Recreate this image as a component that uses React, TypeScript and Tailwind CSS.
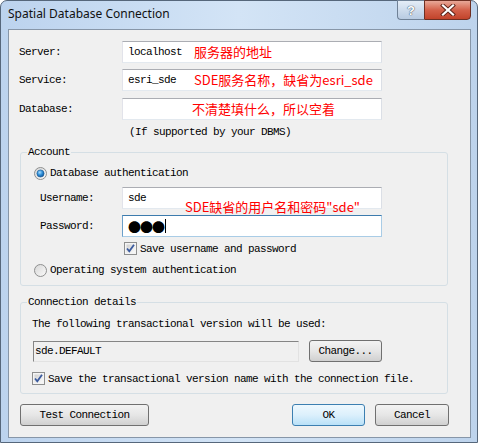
import React from "react";

const mono = { fontFamily: '"Liberation Mono", "Noto Sans CJK SC", monospace' };
const cjk = { fontFamily: '"Noto Sans CJK SC", "Noto Sans", sans-serif' };

function Radio({ checked }: { checked?: boolean }) {
  return (
    <svg width="13" height="13" viewBox="0 0 13 13" className="shrink-0">
      <defs>
        <linearGradient id="rg" x1="0" y1="0" x2="1" y2="1">
          <stop offset="0" stopColor="#d6d6d6" />
          <stop offset="1" stopColor="#fbfbfb" />
        </linearGradient>
        <radialGradient id="rd" cx="0.4" cy="0.35" r="0.7">
          <stop offset="0" stopColor="#a8dcff" />
          <stop offset="0.5" stopColor="#2f8fd8" />
          <stop offset="1" stopColor="#0d4f94" />
        </radialGradient>
      </defs>
      <circle cx="6.5" cy="6.5" r="6" fill="url(#rg)" stroke="#8e8f8f" />
      {checked && <circle cx="6.5" cy="6.5" r="3.6" fill="url(#rd)" stroke="#1b5a93" strokeWidth="0.6" />}
    </svg>
  );
}

function Check() {
  return (
    <svg width="13" height="13" viewBox="0 0 13 13" className="shrink-0">
      <defs>
        <linearGradient id="cg" x1="0" y1="0" x2="1" y2="1">
          <stop offset="0" stopColor="#cfcfcf" />
          <stop offset="1" stopColor="#fafafa" />
        </linearGradient>
      </defs>
      <rect x="0.5" y="0.5" width="12" height="12" fill="#f4f4f4" stroke="#8e8f8f" />
      <rect x="2.5" y="2.5" width="8" height="8" fill="url(#cg)" />
      <path d="M3 6.5 L5.3 9.3 L10 2.8" fill="none" stroke="#3a5a9e" strokeWidth="1.8" />
    </svg>
  );
}

function Edit({ children, focused }: { children?: React.ReactNode; focused?: boolean }) {
  const b = focused
    ? "border-[#a9cce6] border-t-[#3d7bad] border-l-[#6b9fc9]"
    : "border-[#e3e9ef] border-t-[#abadb3] border-l-[#e2e3ea] border-r-[#dbdfe6]";
  return (
    <div className={`flex h-[22px] w-[260px] items-center border bg-white pl-[5px] ${b}`}>
      {children}
    </div>
  );
}

function Button({ children, w, focused }: { children: React.ReactNode; w: string; focused?: boolean }) {
  const look = focused
    ? "border-[#3c7fb1] bg-linear-to-b from-[#eef8fe] via-[#dcf0fc] to-[#b9e1f8]"
    : "border-[#707070] bg-linear-to-b from-[#f3f3f3] via-[#e6e6e6] to-[#d0d0d0]";
  return (
    <div className={`flex h-[22px] items-center justify-center rounded-[3px] border text-black ${look} ${w}`}>
      {children}
    </div>
  );
}

function Group({ title, children }: { title: string; children: React.ReactNode }) {
  return (
    <fieldset className="ml-px w-[428px] rounded-[3px] border border-[#d5dfe5]">
      <legend className="ml-[6px] px-px leading-[12px]">{title}</legend>
      {children}
    </fieldset>
  );
}

export default function App() {
  return (
    <div className="h-[443px] w-[478px] rounded-t-[7px] border border-[#56677b] bg-linear-to-r from-[#bcd3ee] via-[#d3e4f6] to-[#bdd3ec]">
      <div className="flex h-[28px] items-start">
        <div className="pl-[7px] pt-[5px] text-[12px] leading-[16px] text-[#111]" style={{ fontFamily: '"Noto Sans", sans-serif' }}>
          Spatial Database Connection
        </div>
        <div className="mr-[6px] ml-auto -mt-px flex">
          <div className="flex h-[20px] w-[27px] items-center justify-center rounded-bl-[4px] border border-r-0 border-[#6f8196] bg-linear-to-b from-[#e4edf7] to-[#b8cbe2] text-[13px] font-bold leading-none text-white [text-shadow:0_0_1px_#36475c,0_0_1px_#36475c]" style={{ fontFamily: '"Liberation Sans", sans-serif' }}>
            ?
          </div>
          <div className="flex h-[20px] w-[47px] items-center justify-center rounded-br-[4px] border border-[#6e2f22] bg-linear-to-b from-[#e8a898] via-[#d4614a] to-[#c2432a]">
            <svg width="16" height="12" viewBox="0 0 16 12">
              <path d="M3 1.5 L13 10.5 M13 1.5 L3 10.5" stroke="#5a2116" strokeWidth="4" strokeLinecap="square" />
              <path d="M3 1.5 L13 10.5 M13 1.5 L3 10.5" stroke="#ffffff" strokeWidth="2.2" strokeLinecap="square" />
            </svg>
          </div>
        </div>
      </div>

      <div
        className="ml-[7px] flex h-[409px] w-[463px] flex-col border border-[#8796a8] bg-[#f0f0f0] pl-[10px] text-[11px] leading-[12px] tracking-[-0.6px] text-black"
        style={mono}
      >
        {[
          { label: "Server:", value: "localhost", note: "服务器的地址", mt: "mt-[11px]", ml: "ml-[66px]" },
          { label: "Service:", value: "esri_sde", note: "SDE服务名称，缺省为esri_sde", mt: "mt-[6px]", ml: "ml-[66px]" },
          { label: "Database:", value: "", note: "不清楚填什么，所以空着", mt: "mt-[7px]", ml: "ml-[64px]" },
        ].map((r) => (
          <div key={r.label} className={`flex items-center ${r.mt}`}>
            <div className="w-[103px]">{r.label}</div>
            <Edit>
              {r.value && <span className="w-[66px] shrink-0">{r.value}</span>}
              <span className={`text-[13px] tracking-normal text-[#ff0000] ${r.value ? "" : r.ml}`} style={cjk}>
                {r.note}
              </span>
            </Edit>
          </div>
        ))}

        <div className="mt-[6px] ml-[110px]">(If supported by your DBMS)</div>

        <div className="mt-[8px]">
          <Group title="Account">
            <div className="mt-[8px] ml-[13px] flex h-[14px] items-center gap-[3px]">
              <Radio checked />
              <span>Database authentication</span>
            </div>
            <div className="relative mt-[7px] ml-[19px] flex items-center">
              <div className="w-[82px]">Username:</div>
              <Edit>sde</Edit>
              <span className="absolute top-[12px] left-[145px] text-[13px] leading-[16px] tracking-normal text-[#ff0000]" style={cjk}>
                SDE缺省的用户名和密码"sde"
              </span>
            </div>
            <div className="mt-[6px] ml-[19px] flex items-center">
              <div className="w-[82px]">Password:</div>
              <Edit focused>
                <span className="text-[13px] leading-none tracking-[-1px]" style={cjk}>●●●</span>
                <span className="ml-px h-[14px] w-px bg-black" />
              </Edit>
            </div>
            <div className="mt-[5px] ml-[103px] flex h-[13px] items-center gap-[3px]">
              <Check />
              <span>Save username and password</span>
            </div>
            <div className="mt-[8px] mb-[8px] ml-[13px] flex h-[14px] items-center gap-[3px]">
              <Radio />
              <span>Operating system authentication</span>
            </div>
          </Group>
        </div>

        <div className="mt-[10px]">
          <Group title="Connection details">
            <div className="mt-[10px] ml-[11px]">The following transactional version will be used:</div>
            <div className="mt-[10px] ml-[12px] flex items-center gap-[10px]">
              <div className="flex h-[21px] w-[266px] items-center border border-[#e2e2e2] border-t-[#858585] border-l-[#858585] bg-[#f0f0f0] pl-px">
                sde.DEFAULT
              </div>
              <Button w="w-[73px]">Change...</Button>
            </div>
            <div className="mt-[10px] mb-[8px] ml-[11px] flex h-[13px] items-center gap-[3px]">
              <Check />
              <span>Save the transactional version name with the connection file.</span>
            </div>
          </Group>
        </div>

        <div className="mt-[10px] ml-px flex">
          <Button w="w-[129px]">Test Connection</Button>
          <div className="ml-auto mr-[21px] flex gap-[10px]">
            <Button w="w-[73px]" focused>OK</Button>
            <Button w="w-[74px]">Cancel</Button>
          </div>
        </div>
      </div>
    </div>
  );
}
